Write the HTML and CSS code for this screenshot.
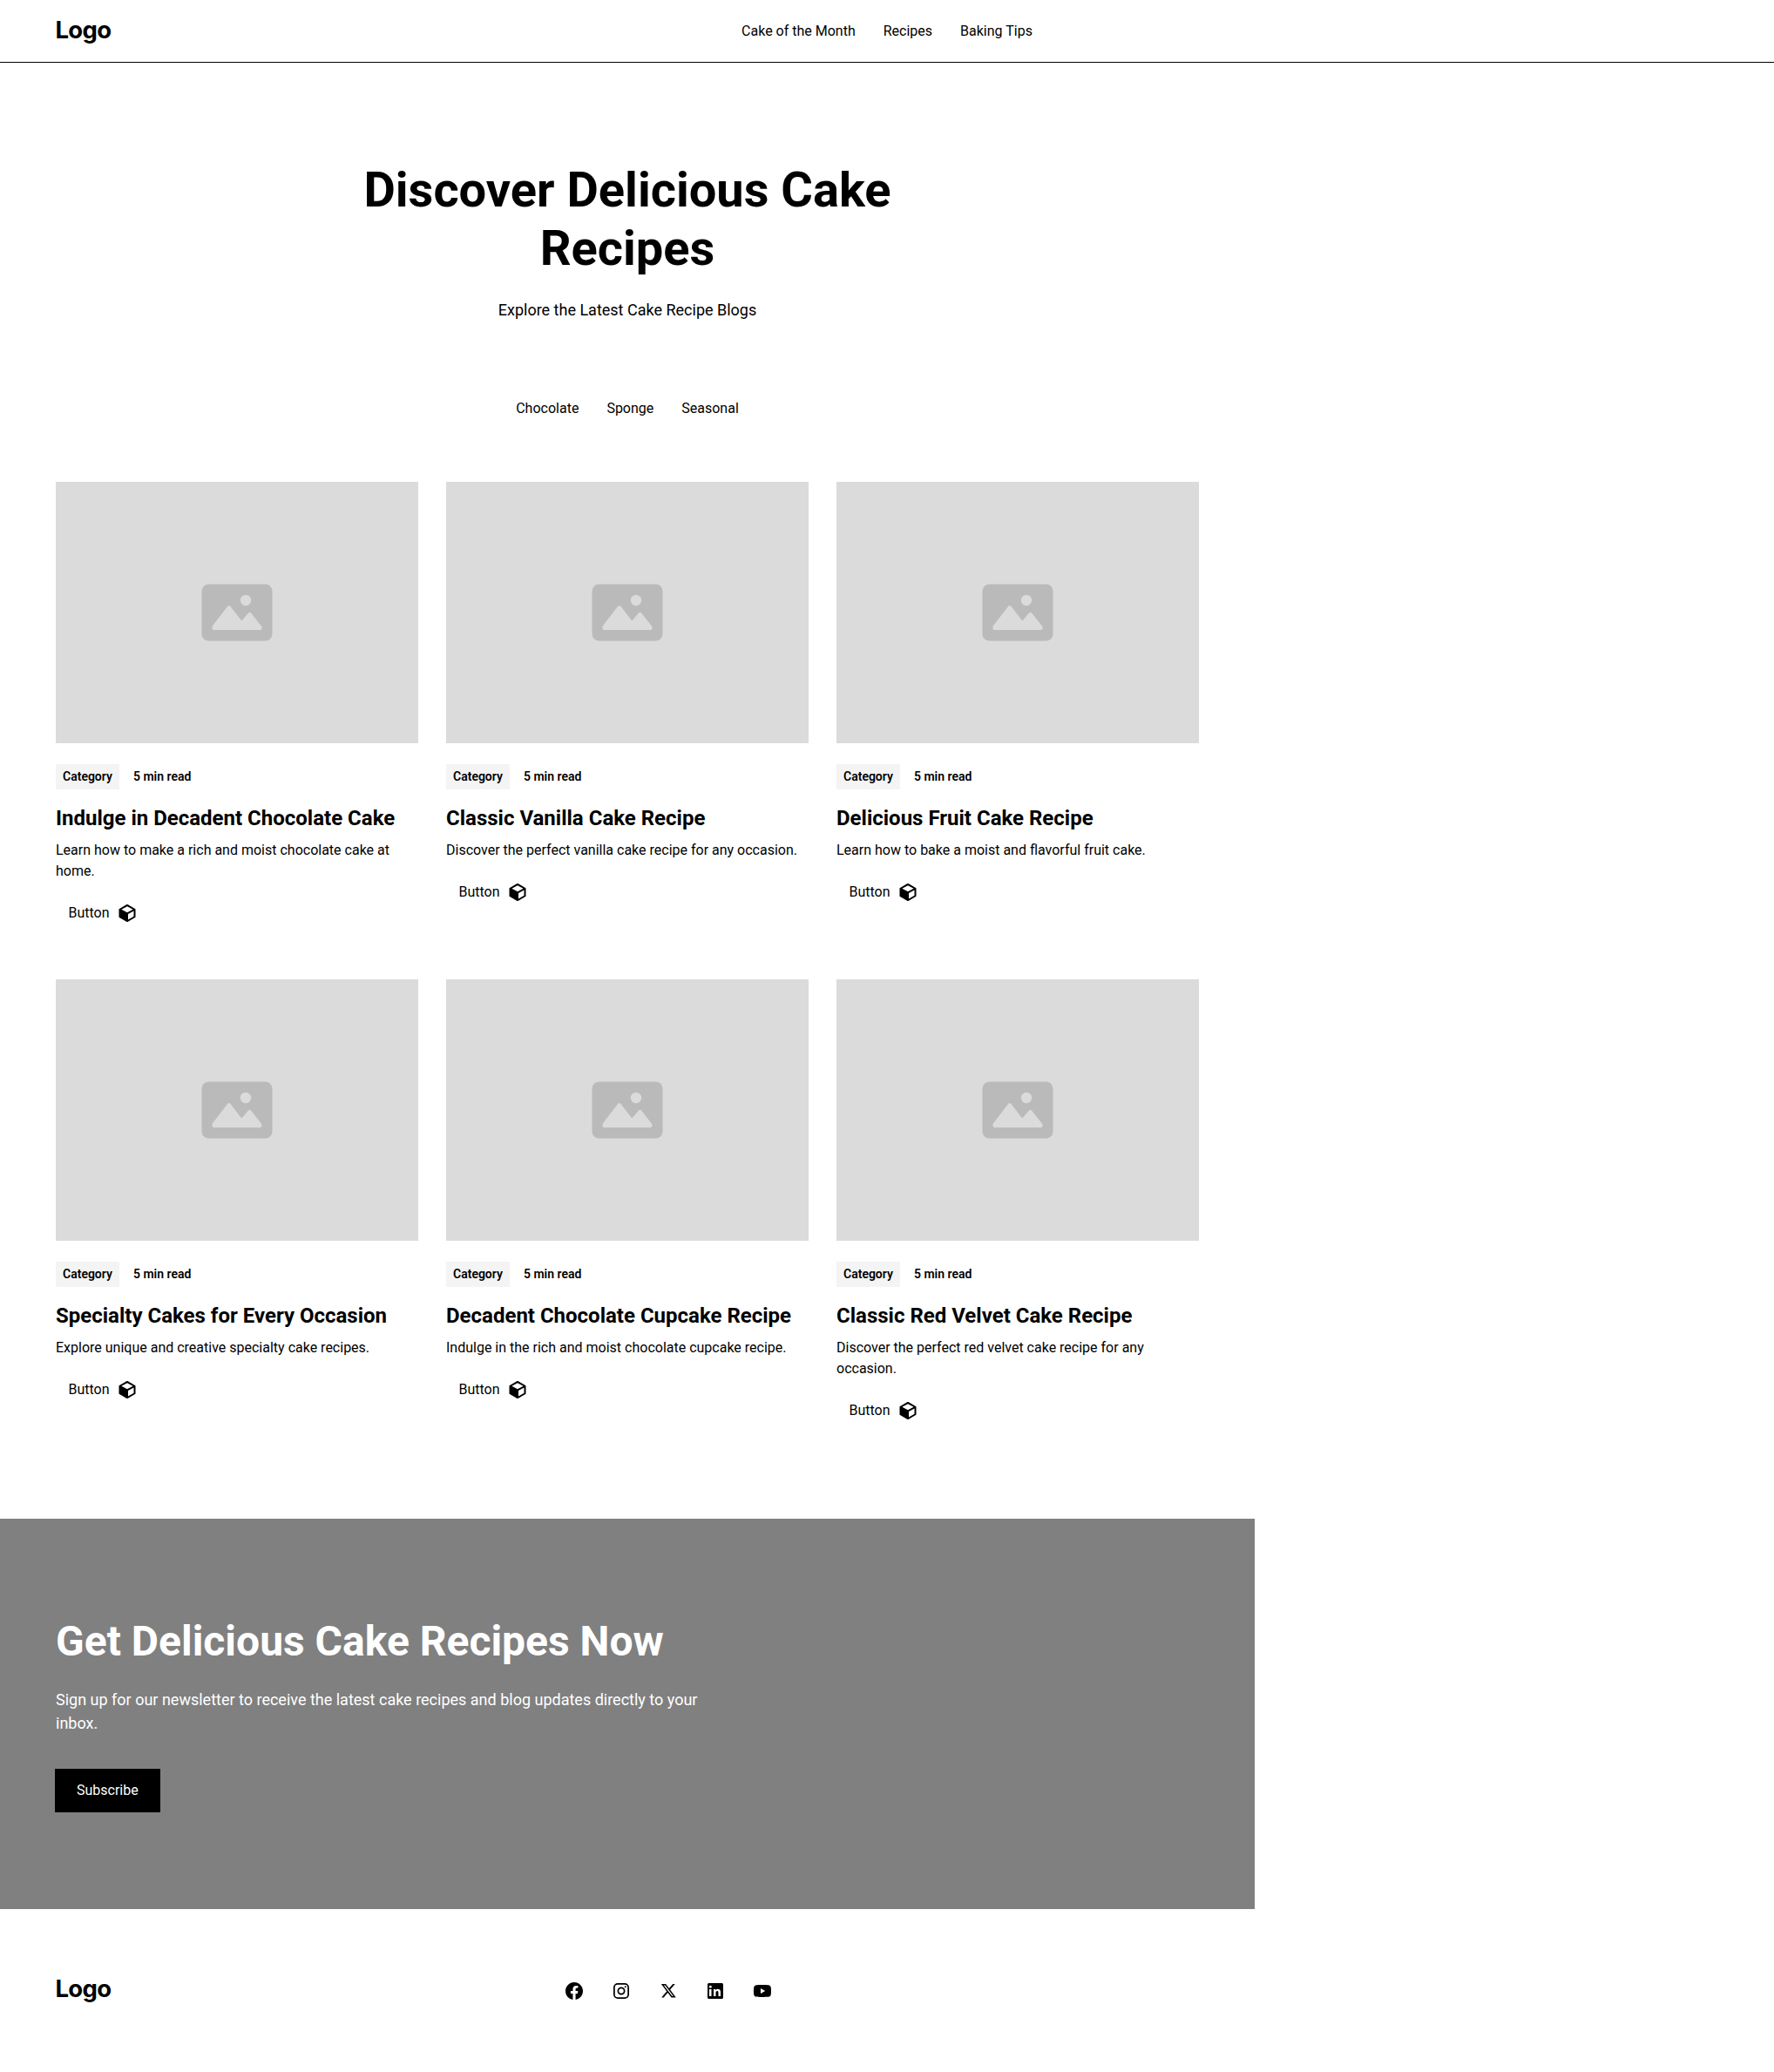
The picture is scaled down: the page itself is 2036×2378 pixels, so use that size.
FILE: index.html
```html
<!DOCTYPE html>
<html lang="en">
<head>
<meta charset="utf-8">
<title>Cake Recipes</title>
<link rel="stylesheet" href="styles.css">
</head>
<body>
<svg class="defs" aria-hidden="true">
  <symbol id="placeholder" viewBox="0 0 82 66"><path fill="#bababa" d="M8.500 .5h65a8 8 0 0 1 8 8v49a8 8 0 0 1-8 8h-65a8 8 0 0 1-8-8v-49a8 8 0 0 1 8-8z"/><circle cx="51" cy="19" r="6.200" fill="#dbdbdb"/><path fill="#dbdbdb" stroke="#dbdbdb" stroke-width="4" stroke-linejoin="round" d="M14.500 51v-1.500L31.800 27 44.500 43.500a2.500 2.500 0 0 0 3.500 0L55.500 34.800 67.500 50v1z"/></symbol>
  <symbol id="cube" viewBox="0 0 24 24"><path fill-rule="evenodd" d="M11.500 2.120a1 1 0 0 1 1 0l8.500 4.800a1 1 0 0 1 .5.870v8.420a1 1 0 0 1-.5.870l-8.500 4.800a1 1 0 0 1-1 0L3 17.080a1 1 0 0 1-.5-.870V7.790A1 1 0 0 1 3 6.920zM12 4.200 5.400 7.800 12 11.300l6.600-3.500zM13 13v6.400l6.500-3.700V9.500z"/></symbol>
</svg>
<header class="header">
  <div class="logo">Logo</div>
  <nav class="nav"><a>Cake of the Month</a><a>Recipes</a><a>Baking Tips</a></nav>
</header>
<main class="page">
  <section class="blog">
    <div class="intro">
      <h1>Discover Delicious Cake Recipes</h1>
      <p>Explore the Latest Cake Recipe Blogs</p>
    </div>
    <div class="tabs"><a>Chocolate</a><a>Sponge</a><a>Seasonal</a></div>
    <div class="cards">
      <article class="card">
        <div class="thumb"><svg><use href="#placeholder"/></svg></div>
        <div class="meta"><span class="tag">Category</span><span>5 min read</span></div>
        <h2>Indulge in Decadent Chocolate Cake</h2>
        <p>Learn how to make a rich and moist chocolate cake at home.</p>
        <a class="more">Button<svg><use href="#cube"/></svg></a>
      </article>
      <article class="card">
        <div class="thumb"><svg><use href="#placeholder"/></svg></div>
        <div class="meta"><span class="tag">Category</span><span>5 min read</span></div>
        <h2>Classic Vanilla Cake Recipe</h2>
        <p>Discover the perfect vanilla cake recipe for any occasion.</p>
        <a class="more">Button<svg><use href="#cube"/></svg></a>
      </article>
      <article class="card">
        <div class="thumb"><svg><use href="#placeholder"/></svg></div>
        <div class="meta"><span class="tag">Category</span><span>5 min read</span></div>
        <h2>Delicious Fruit Cake Recipe</h2>
        <p>Learn how to bake a moist and flavorful fruit cake.</p>
        <a class="more">Button<svg><use href="#cube"/></svg></a>
      </article>
      <article class="card">
        <div class="thumb"><svg><use href="#placeholder"/></svg></div>
        <div class="meta"><span class="tag">Category</span><span>5 min read</span></div>
        <h2>Specialty Cakes for Every Occasion</h2>
        <p>Explore unique and creative specialty cake recipes.</p>
        <a class="more">Button<svg><use href="#cube"/></svg></a>
      </article>
      <article class="card">
        <div class="thumb"><svg><use href="#placeholder"/></svg></div>
        <div class="meta"><span class="tag">Category</span><span>5 min read</span></div>
        <h2>Decadent Chocolate Cupcake Recipe</h2>
        <p>Indulge in the rich and moist chocolate cupcake recipe.</p>
        <a class="more">Button<svg><use href="#cube"/></svg></a>
      </article>
      <article class="card">
        <div class="thumb"><svg><use href="#placeholder"/></svg></div>
        <div class="meta"><span class="tag">Category</span><span>5 min read</span></div>
        <h2>Classic Red Velvet Cake Recipe</h2>
        <p>Discover the perfect red velvet cake recipe for any occasion.</p>
        <a class="more">Button<svg><use href="#cube"/></svg></a>
      </article>
    </div>
  </section>
  <section class="cta">
    <h2>Get Delicious Cake Recipes Now</h2>
    <p>Sign up for our newsletter to receive the latest cake recipes and blog updates directly to your inbox.</p>
    <a class="subscribe">Subscribe</a>
  </section>
</main>
<footer class="footer">
  <div class="logo">Logo</div>
  <div class="social">
    <svg viewBox="0 0 24 24"><path d="M22 12.060C22 6.505 17.523 2 12 2S2 6.505 2 12.060c0 5.023 3.657 9.185 8.438 9.940v-7.031h-2.540v-2.909h2.540V9.845c0-2.522 1.492-3.915 3.777-3.915 1.094 0 2.238.197 2.238.197v2.476h-1.260c-1.243 0-1.630.775-1.630 1.571v1.886h2.773l-.443 2.909h-2.330V22C18.343 21.245 22 17.083 22 12.060z"/></svg>
    <svg viewBox="0 0 24 24"><path fill-rule="evenodd" d="M16 3H8a5 5 0 0 0-5 5v8a5 5 0 0 0 5 5h8a5 5 0 0 0 5-5V8a5 5 0 0 0-5-5zm3.250 13A3.260 3.260 0 0 1 16 19.250H8A3.260 3.260 0 0 1 4.750 16V8A3.260 3.260 0 0 1 8 4.750h8A3.260 3.260 0 0 1 19.250 8v8zM12 7.500a4.500 4.500 0 1 0 0 9 4.500 4.500 0 0 0 0-9zm0 7.250a2.750 2.750 0 1 1 0-5.500 2.750 2.750 0 0 1 0 5.500zM16.750 6.250a1 1 0 1 0 0 2 1 1 0 0 0 0-2z"/></svg>
    <svg viewBox="0 0 24 24"><path d="M17.176 4h2.600l-5.680 6.520L20.780 19.400h-5.233l-4.098-5.380-4.690 5.380H4.157l6.076-6.975L3.821 4h5.366l3.705 4.918L17.176 4zm-.912 13.832h1.440L8.404 5.486H6.858l9.406 12.346z"/></svg>
    <svg viewBox="0 0 24 24"><path fill-rule="evenodd" d="M4.500 3h15A1.500 1.500 0 0 1 21 4.500v15a1.500 1.500 0 0 1-1.500 1.500h-15A1.500 1.500 0 0 1 3 19.500v-15A1.500 1.500 0 0 1 4.500 3zm3.020 7h-2.500v8h2.500v-8zm.3-2.750a1.440 1.440 0 0 0-1.440-1.440 1.440 1.440 0 0 0 0 2.880 1.440 1.440 0 0 0 1.440-1.440zM18 13.140c0-2.405-1.530-3.340-3.050-3.340a2.850 2.850 0 0 0-2.530 1.290h-.070V10H10v8h2.500v-4.255a1.660 1.660 0 0 1 1.500-1.790h.095c.795 0 1.385.5 1.385 1.760V18h2.500l.020-4.860z"/></svg>
    <svg viewBox="0 0 24 24"><path d="M21.593 7.203a2.506 2.506 0 0 0-1.762-1.766C18.265 5.007 12 5 12 5s-6.264-.007-7.831.404a2.560 2.560 0 0 0-1.766 1.778c-.413 1.566-.417 4.814-.417 4.814s-.004 3.264.406 4.814c.230.857.905 1.534 1.763 1.765 1.582.430 7.830.437 7.830.437s6.265.007 7.831-.403a2.515 2.515 0 0 0 1.767-1.763c.414-1.565.417-4.812.417-4.812s.020-3.265-.407-4.831zM9.996 15.005l.005-6 5.207 3.005-5.212 2.995z"/></svg>
  </div>
</footer>
</body>
</html>
```
FILE: styles.css
```css
* { box-sizing: border-box; margin: 0; padding: 0; }
body { font: 16px/24px Roboto, sans-serif; color: #000; background: #fff; }
.defs { display: none; }
.header {
  display: grid; grid-template-columns: 1fr auto 1fr; align-items: center;
  height: 72px; padding: 0 64px; border-bottom: 1px solid #000;
}
.logo {
  font: 700 27.500px/33px Inter, sans-serif; letter-spacing: -.7px;
  height: 36px; margin-left: -.5px;
}
.nav { display: flex; gap: 32px; }
.page { width: 1440px; }
.blog { padding: 112px 64px; }
.intro { width: 768px; margin: 0 auto 80px; padding-top: 1px; text-align: center; }
.intro h1 { font-size: 56px; line-height: 1.2; font-weight: 700; margin-bottom: 23px; }
.intro p { font-size: 18px; line-height: 27px; }
.tabs { display: flex; justify-content: center; margin-bottom: 64px; }
.tabs a { padding: 8px 16px; }
.cards { display: grid; grid-template-columns: repeat(3, 1fr); gap: 64px 32px; }
.thumb {
  display: flex; align-items: center; justify-content: center;
  height: 300px; margin-bottom: 24px; background: #dbdbdb;
}
.thumb svg { width: 82px; height: 66px; }
.meta {
  display: flex; align-items: center; gap: 16px; margin-bottom: 17px;
  font-size: 14px; line-height: 21px; font-weight: 600;
}
.tag { padding: 4px 8px; background: #f4f4f4; }
.card h2 { font-size: 24px; line-height: 1.4; font-weight: 700; margin-bottom: 7px; }
.more { display: flex; align-items: center; gap: 8.500px; margin-top: 24px; padding-left: 14.500px; }
.more svg { width: 24px; height: 24px; }
.cta { padding: 112px 64px; background: #808080; color: #fff; }
.cta h2 { font-size: 48px; line-height: 58px; font-weight: 700; margin-bottom: 24px; }
.cta p { width: 768px; font-size: 18px; line-height: 27px; margin-bottom: 40px; }
.subscribe {
  display: block; width: max-content; padding: 12px 24px;
  background: #000; outline: 1px solid #000;
}
.footer {
  display: grid; grid-template-columns: 1fr auto 1fr; align-items: center;
  width: 1534px; height: 187px; padding: 0 64px;
}
.social { display: flex; gap: 30px; padding-top: 1px; }
.social svg { width: 24px; height: 24px; }
```
